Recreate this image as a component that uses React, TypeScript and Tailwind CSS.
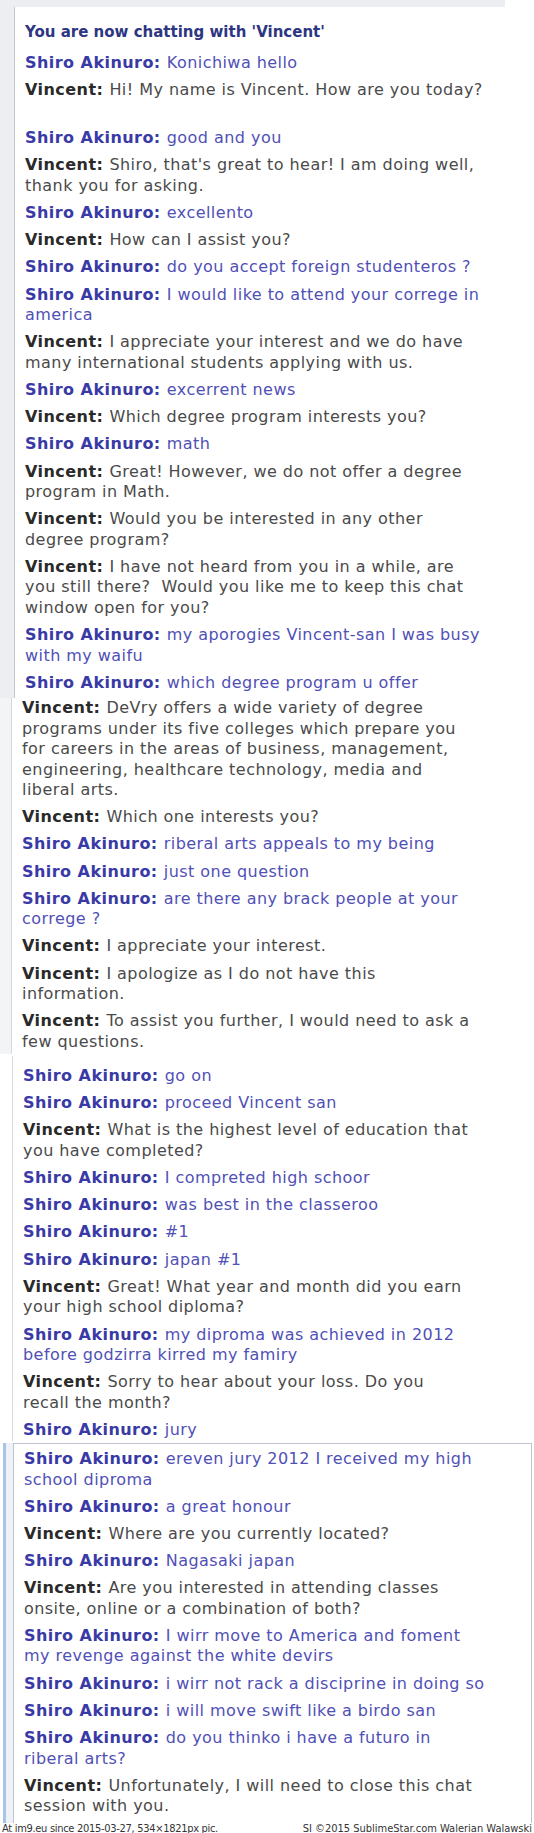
type Msg = { who: "S" | "V"; lines: string[]; gapAfter?: boolean };

const s = (...lines: string[]): Msg => ({ who: "S", lines });
const v = (...lines: string[]): Msg => ({ who: "V", lines });

const panel1: Msg[] = [
  s("Konichiwa hello"),
  { ...v("Hi! My name is Vincent. How are you today?"), gapAfter: true },
  s("good and you"),
  v("Shiro, that's great to hear! I am doing well,", "thank you for asking."),
  s("excellento"),
  v("How can I assist you?"),
  s("do you accept foreign studenteros ?"),
  s("I would like to attend your correge in", "america"),
  v("I appreciate your interest and we do have", "many international students applying with us."),
  s("excerrent news"),
  v("Which degree program interests you?"),
  s("math"),
  v("Great! However, we do not offer a degree", "program in Math."),
  v("Would you be interested in any other", "degree program?"),
  v(
    "I have not heard from you in a while, are",
    "you still there?  Would you like me to keep this chat",
    "window open for you?"
  ),
  s("my aporogies Vincent-san I was busy", "with my waifu"),
  s("which degree program u offer"),
];

const panel2: Msg[] = [
  v(
    "DeVry offers a wide variety of degree",
    "programs under its five colleges which prepare you",
    "for careers in the areas of business, management,",
    "engineering, healthcare technology, media and",
    "liberal arts."
  ),
  v("Which one interests you?"),
  s("riberal arts appeals to my being"),
  s("just one question"),
  s("are there any brack people at your", "correge ?"),
  v("I appreciate your interest."),
  v("I apologize as I do not have this", "information."),
  v("To assist you further, I would need to ask a", "few questions."),
];

const panel3: Msg[] = [
  s("go on"),
  s("proceed Vincent san"),
  v("What is the highest level of education that", "you have completed?"),
  s("I compreted high schoor"),
  s("was best in the classeroo"),
  s("#1"),
  s("japan #1"),
  v("Great! What year and month did you earn", "your high school diploma?"),
  s("my diproma was achieved in 2012", "before godzirra kirred my famiry"),
  v("Sorry to hear about your loss. Do you", "recall the month?"),
  s("jury"),
];

const panel4: Msg[] = [
  s("ereven jury 2012 I received my high", "school diproma"),
  s("a great honour"),
  v("Where are you currently located?"),
  s("Nagasaki japan"),
  v("Are you interested in attending classes", "onsite, online or a combination of both?"),
  s("I wirr move to America and foment", "my revenge against the white devirs"),
  s("i wirr not rack a disciprine in doing so"),
  s("i will move swift like a birdo san"),
  s("do you thinko i have a futuro in", "riberal arts?"),
  v("Unfortunately, I will need to close this chat", "session with you."),
];

function Message({ m }: { m: Msg }) {
  const shiro = m.who === "S";
  return (
    <div className={m.gapAfter ? "mb-[28px]" : "mb-[6.7px]"}>
      {m.lines.map((line, i) => (
        <div key={i} className="whitespace-pre leading-[20.5px]">
          {i === 0 && (
            <span className={shiro ? "font-bold text-[#3a3aa6]" : "font-bold text-[#2a2a2a]"}>
              {shiro ? "Shiro Akinuro:" : "Vincent:"}{" "}
            </span>
          )}
          <span className={shiro ? "text-[#5050b6]" : "text-[#4a4a4a]"}>{line}</span>
        </div>
      ))}
    </div>
  );
}

function List({ items }: { items: Msg[] }) {
  return (
    <>
      {items.map((m, i) => (
        <Message key={i} m={m} />
      ))}
    </>
  );
}

export default function App() {
  return (
    <div
      className="w-[534px] bg-white text-[16px] tracking-[0.45px] overflow-hidden"
      style={{ fontFamily: '"DejaVu Sans", Verdana, sans-serif' }}
    >
      {/* first screenshot */}
      <div className="h-[7px] w-[505px] bg-[#eceef1]" />
      <div className="flex h-[691px]">
        <div className="w-[15px] shrink-0 bg-[#eceef1] border-r border-[#c4c7cc]" />
        <div className="pl-[10px] pt-[15px]">
          <div className="mb-[10px] text-[15px] tracking-normal font-bold text-[#2d3682] leading-[20.5px]">
            You are now chatting with 'Vincent'
          </div>
          <List items={panel1} />
        </div>
      </div>

      {/* second screenshot */}
      <div className="flex h-[356px]">
        <div className="w-[12px] shrink-0 bg-[#f3f4f6] border-r border-[#d5d8de]" />
        <div className="flex-1 flex flex-col">
          <div className="pl-[10px] flex-1">
            <List items={panel2} />
          </div>
          <div className="h-[2px] w-[506px] bg-[#cdd1dc]" />
        </div>
      </div>

      {/* third screenshot */}
      <div className="flex h-[385px] mt-[2px]">
        <div className="w-[13px] shrink-0 border-r border-[#d5d8de]" />
        <div className="flex-1 flex flex-col">
          <div className="pl-[10px] pt-[10px] flex-1">
            <List items={panel3} />
          </div>
          <div className="h-[2px] w-[505px] bg-[#cdd1dc]" />
        </div>
      </div>

      {/* fourth screenshot */}
      <div className="flex h-[380px] mt-[2px]">
        <div className="w-[3px] shrink-0" />
        <div className="w-[3px] shrink-0 bg-[#a9c3e6]" />
        <div className="w-[8px] shrink-0 bg-[#eef2f7] border-r border-[#bfc4cc]" />
        <div className="flex-1 border-t border-r border-[#bfc4cc] mr-[2px] pl-[10px] pt-[5px]">
          <List items={panel4} />
        </div>
      </div>

      {/* watermark */}
      <div
        className="flex justify-between h-[12px] px-[2px] text-[11px] tracking-normal leading-[12px] text-[#333]"
        style={{ fontFamily: '"DejaVu Sans Condensed", "DejaVu Sans", sans-serif' }}
      >
        <span className="tracking-[-0.3px]">
          At <span className="underline">im9.eu</span> since 2015-03-27, 534×1821px pic.
        </span>
        <span>SI ©2015 SublimeStar.com Walerian Walawski</span>
      </div>
    </div>
  );
}
